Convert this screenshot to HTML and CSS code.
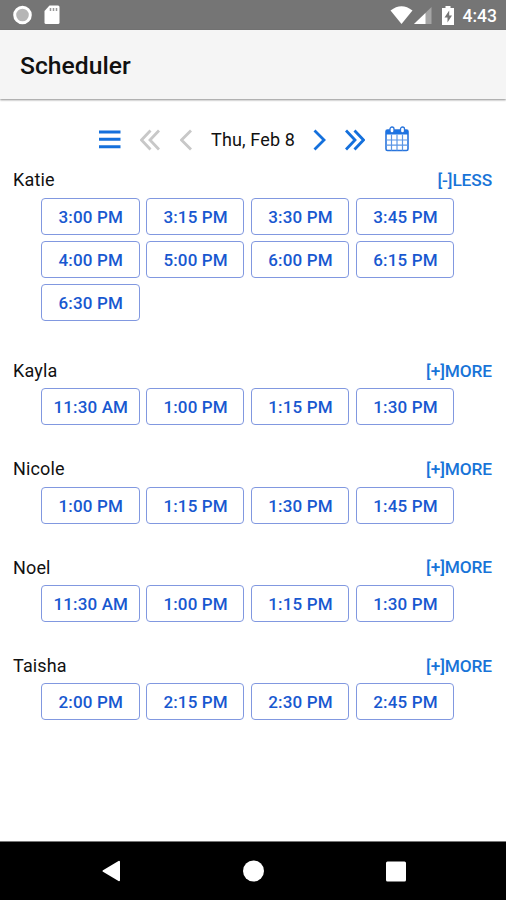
FILE: index.html
```html
<!DOCTYPE html>
<html lang="en">
<head>
    <meta charset="UTF-8">
    <meta name="viewport" content="width=device-width, initial-scale=1.0">
    <title>Scheduler</title>
    <link rel="stylesheet" href="styles.css">
</head>
<body>
    <div class="status-bar">
        <svg class="status-record" width="20" height="20" viewBox="0 0 20 20">
            <circle cx="9.500" cy="10" r="7.800" fill="#b5b5b5" stroke="#fff" stroke-width="3"/>
        </svg>
        <svg class="status-card" width="16" height="20" viewBox="0 0 16 20">
            <path d="M5.500 .5H14q1.500 0 1.500 1.500V17.500q0 1.500-1.500 1.500H2Q.5 19 .5 17.500V6z" fill="#fff"/>
            <path d="M6.500 3v3M9.500 3v3M12.500 3v3" stroke="#999" stroke-width="1.500"/>
        </svg>
        <div class="status-right">
            <svg width="23" height="18" viewBox="0 0 23 18">
                <path d="M.5 4.500Q11.500-4 22.500 4.500L11.500 18z" fill="#fff"/>
            </svg>
            <svg class="status-signal" width="18" height="17" viewBox="0 0 18 17">
                <path d="M17.500 0V17H0z" fill="#a5a5a5"/>
                <path d="M11.500 6V17H0z" fill="#fff"/>
            </svg>
            <svg class="status-battery" width="12" height="19" viewBox="0 0 12 19">
                <path d="M3.500 0h5v2H12v17H0V2h3.500z" fill="#fff"/>
                <path d="M7.200 4.500L2.500 11.500h3V16.500l4.500-7H7.200z" fill="#757575"/>
            </svg>
            <span class="clock">4:43</span>
        </div>
    </div>

    <header class="header">
        <h1>Scheduler</h1>
    </header>

    <main class="content">
        <div class="toolbar">
            <svg class="icon-menu" width="22" height="20" viewBox="0 0 22 20">
                <path d="M0 2h21.500M0 9.300h21.500M0 16.700h21.500" stroke="#1470dc" stroke-width="3"/>
            </svg>
            <svg class="icon-nav disabled icon-first" width="20" height="22" viewBox="0 0 20 22">
                <path d="M10.500 1.500L1.500 11l9 9.500M19 1.500L10 11l9 9.500"/>
            </svg>
            <svg class="icon-nav disabled icon-prev" width="12" height="22" viewBox="0 0 12 22">
                <path d="M11 1.500L1.500 11l9.500 9.500"/>
            </svg>
            <span class="date">Thu, Feb 8</span>
            <svg class="icon-nav icon-next" width="13" height="22" viewBox="0 0 13 22">
                <path d="M1.500 1.500L11 11l-9.500 9.500"/>
            </svg>
            <svg class="icon-nav icon-last" width="20" height="22" viewBox="0 0 20 22">
                <path d="M1 1.500L10 11l-9 9.500M9.500 1.500l9 9.500-9 9.500"/>
            </svg>
            <svg class="icon-calendar" width="24" height="26" viewBox="0 0 24 26">
                <rect x="1" y="4" width="22" height="20.500" rx="1.500" fill="#fff" stroke="#2874dc" stroke-width="1.600"/>
                <path d="M1 4h22v4.500H1z" fill="#1b74e4"/>
                <path d="M6.500 8.500v16M12 8.500v16M17.500 8.500v16M1 14h22M1 19.200h22" stroke="#5b96e5" stroke-width="1.200"/>
                <rect x="5" y="1" width="4" height="6" rx="2" fill="#fff" stroke="#2874dc" stroke-width="1.300"/>
                <rect x="15.500" y="1" width="4" height="6" rx="2" fill="#fff" stroke="#2874dc" stroke-width="1.300"/>
            </svg>
        </div>

        <section class="person expanded">
            <div class="person-row"><span>Katie</span><a class="toggle">[-]LESS</a></div>
            <div class="slots">
                <div class="slot">3:00 PM</div>
                <div class="slot">3:15 PM</div>
                <div class="slot">3:30 PM</div>
                <div class="slot">3:45 PM</div>
                <div class="slot">4:00 PM</div>
                <div class="slot">5:00 PM</div>
                <div class="slot">6:00 PM</div>
                <div class="slot">6:15 PM</div>
                <div class="slot">6:30 PM</div>
            </div>
        </section>

        <section class="person">
            <div class="person-row"><span>Kayla</span><a class="toggle">[+]MORE</a></div>
            <div class="slots">
                <div class="slot">11:30 AM</div>
                <div class="slot">1:00 PM</div>
                <div class="slot">1:15 PM</div>
                <div class="slot">1:30 PM</div>
            </div>
        </section>

        <section class="person">
            <div class="person-row"><span>Nicole</span><a class="toggle">[+]MORE</a></div>
            <div class="slots">
                <div class="slot">1:00 PM</div>
                <div class="slot">1:15 PM</div>
                <div class="slot">1:30 PM</div>
                <div class="slot">1:45 PM</div>
            </div>
        </section>

        <section class="person">
            <div class="person-row"><span>Noel</span><a class="toggle">[+]MORE</a></div>
            <div class="slots">
                <div class="slot">11:30 AM</div>
                <div class="slot">1:00 PM</div>
                <div class="slot">1:15 PM</div>
                <div class="slot">1:30 PM</div>
            </div>
        </section>

        <section class="person">
            <div class="person-row"><span>Taisha</span><a class="toggle">[+]MORE</a></div>
            <div class="slots">
                <div class="slot">2:00 PM</div>
                <div class="slot">2:15 PM</div>
                <div class="slot">2:30 PM</div>
                <div class="slot">2:45 PM</div>
            </div>
        </section>
    </main>

    <nav class="nav-bar">
        <svg width="20" height="22" viewBox="0 0 20 22">
            <path d="M17 1.800V20.200L1.500 11z" fill="#fff" stroke="#fff" stroke-width="2" stroke-linejoin="round"/>
        </svg>
        <svg width="22" height="22" viewBox="0 0 22 22">
            <circle cx="10.500" cy="11" r="10.500" fill="#fff"/>
        </svg>
        <svg width="20" height="22" viewBox="0 0 20 22">
            <rect x="0" y="1.500" width="20" height="20" rx="1.500" fill="#fff"/>
        </svg>
    </nav>
</body>
</html>
```

FILE: styles.css
```css
body, html {
    margin: 0;
    padding: 0;
    height: 100%;
}

body {
    display: flex;
    flex-direction: column;
    font-family: Roboto, sans-serif;
    font-size: 18px;
    color: #111;
    background: #fff;
    overflow: hidden;
}

svg {
    display: block;
    flex-shrink: 0;
}

.status-bar {
    display: flex;
    align-items: center;
    box-sizing: border-box;
    height: 30px;
    padding: 0 9px 0 13px;
    background: #757575;
}

.status-card {
    margin-left: 11px;
}

.status-right {
    display: flex;
    align-items: center;
    margin-left: auto;
}

.status-signal {
    margin-left: 1px;
}

.status-battery {
    margin-left: 10px;
}

.clock {
    margin-left: 9px;
    font-size: 17.5px;
    font-weight: 500;
    line-height: 30px;
    padding-top: 1px;
    color: #fff;
}

.header {
    display: flex;
    align-items: center;
    box-sizing: border-box;
    height: 69px;
    padding: 2px 20px 0;
    background: #f5f5f5;
    box-shadow: 0 1px 2px rgba(0, 0, 0, 0.45);
}

.header h1 {
    margin: 0;
    font-size: 24.7px;
    font-weight: 500;
}

.content {
    flex: 1;
    padding-top: 17px;
}

.toolbar {
    display: flex;
    align-items: center;
    height: 47px;
    padding-left: 99px;
}

.icon-nav {
    fill: none;
    stroke: #1470dc;
    stroke-width: 2.8;
}

.icon-nav.disabled {
    stroke: #c8c8c8;
}

.icon-first {
    margin-left: 19px;
}

.icon-prev {
    margin-left: 20px;
}

.date {
    width: 85px;
    margin-left: 19px;
    letter-spacing: 0.15px;
    white-space: nowrap;
}

.icon-next {
    margin-left: 17px;
}

.icon-last {
    margin-left: 19px;
}

.icon-calendar {
    margin-left: 20px;
    margin-bottom: 1px;
}

.person {
    margin-bottom: 26.9px;
}

.person.expanded {
    margin-bottom: 32.9px;
}

.person-row {
    display: flex;
    justify-content: space-between;
    align-items: center;
    box-sizing: border-box;
    height: 34.5px;
    padding: 0 14px 1px 13px;
    letter-spacing: 0.15px;
}

.toggle {
    font-size: 17.3px;
    font-weight: 500;
    letter-spacing: -0.1px;
    color: #1874d8;
}

.slots {
    display: grid;
    grid-template-columns: repeat(4, 98.5px);
    gap: 6.2px 6.4px;
    padding-left: 41px;
}

.slot {
    display: flex;
    align-items: center;
    justify-content: center;
    box-sizing: border-box;
    height: 37px;
    padding: 1px 0 0 1px;
    border: 1px solid #8198e0;
    border-radius: 4px;
    font-size: 17px;
    font-weight: 500;
    letter-spacing: 0.15px;
    color: #1858d0;
}

.nav-bar {
    display: flex;
    justify-content: space-between;
    align-items: center;
    box-sizing: border-box;
    height: 59px;
    padding: 0 100px 0 102px;
    border-top: 1px solid #777;
    background: #000;
}
```
